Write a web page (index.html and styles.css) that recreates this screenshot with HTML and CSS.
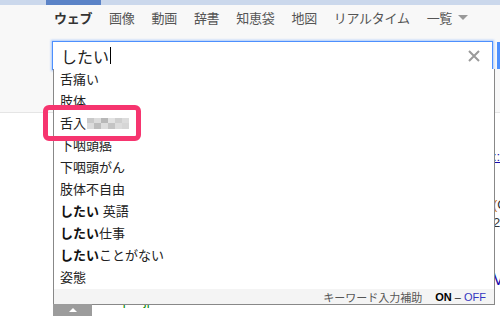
FILE: index.html
```html
<!DOCTYPE html>
<html lang="ja">
<head>
    <meta charset="UTF-8">
    <meta name="viewport" content="width=device-width, initial-scale=1.0">
    <title>したい - 検索</title>
    <link rel="stylesheet" href="styles.css">
</head>
<body>
    <div class="topbar"><span class="topbar-active"></span></div>

    <header class="header">
        <nav class="tabs">
            <a class="tab tab-current">ウェブ</a>
            <a class="tab">画像</a>
            <a class="tab">動画</a>
            <a class="tab">辞書</a>
            <a class="tab">知恵袋</a>
            <a class="tab">地図</a>
            <a class="tab">リアルタイム</a>
            <a class="tab tab-more">一覧<span class="arrow-down"></span></a>
        </nav>

        <div class="search">
            <div class="search-box">
                <span class="query">したい</span><span class="caret"></span>
                <svg class="clear" width="12" height="12" viewBox="0 0 12 12">
                    <path d="M1 1 L11 11 M11 1 L1 11" stroke="#9a9a9a" stroke-width="2"/>
                </svg>

                <!-- suggestion list -->
                <div class="suggest">
                    <ul class="suggest-list">
                        <li>舌痛い</li>
                        <li>肢体</li>
                        <li>舌入<svg class="mosaic" width="42" height="11" viewBox="0 0 42 11">
                            <rect x="0" y="0" width="42" height="11" fill="#dcdcdc"/>
                            <rect x="0" y="0" width="7" height="5" fill="#c9c9c9"/>
                            <rect x="7" y="5" width="7" height="6" fill="#bdbdbd"/>
                            <rect x="14" y="0" width="7" height="5" fill="#b8b8b8"/>
                            <rect x="21" y="5" width="7" height="6" fill="#c4c4c4"/>
                            <rect x="28" y="0" width="7" height="5" fill="#cfcfcf"/>
                            <rect x="35" y="5" width="7" height="6" fill="#d6d6d6"/>
                            <rect x="21" y="0" width="7" height="5" fill="#e2e2e2"/>
                        </svg></li>
                        <li>下咽頭癌</li>
                        <li>下咽頭がん</li>
                        <li>肢体不自由</li>
                        <li><b>したい</b> 英語</li>
                        <li><b>したい</b>仕事</li>
                        <li><b>したい</b>ことがない</li>
                        <li>姿態</li>
                    </ul>
                    <div class="suggest-foot">
                        キーワード入力補助<span class="switch"><b>ON</b> – <a>OFF</a></span>
                    </div>
                    <div class="suggest-tab"><span class="arrow-up"></span></div>
                </div>
            </div>
            <button class="search-btn" type="submit"></button>
        </div>
    </header>

    <main class="results">
        <div class="results-edge">
            <a class="edge-link">::</a>
            <p class="edge-text first"><span class="orange">(</span>C</p>
            <p class="edge-text">2</p>
            <a class="edge-link big">V</a>
        </div>
        <p class="result-url">www.example.jp/search/0001/</p>
    </main>

    <!-- highlight around the third suggestion -->
    <div class="mark"></div>
</body>
</html>
```

FILE: styles.css
```css
body {
    margin: 0;
    width: 500px;
    height: 318px;
    overflow: hidden;
    position: relative;
    background-color: #fff;
    font-family: "Liberation Sans", "Noto Sans CJK JP", sans-serif;
    color: #222;
}

.topbar {
    height: 5px;
    background-color: #cbd8ec;
    padding-left: 46px;
}

.topbar-active {
    display: block;
    width: 55px;
    height: 5px;
    background-color: #5b83c7;
}

.header {
    position: relative;
    z-index: 1;
    background-color: #f8f8f8;
    border-bottom: 1px solid #e5e5e5;
    height: 107px;
}

.tabs {
    display: flex;
    align-items: center;
    gap: 17px;
    height: 24px;
    padding-left: 54px;
}

.tab {
    font-size: 13px;
    color: #555;
    letter-spacing: -0.3px;
}

.tab-current {
    font-weight: bold;
    color: #333;
}

.tab-more {
    display: flex;
    align-items: center;
    gap: 6px;
}

.arrow-down {
    width: 0;
    height: 0;
    border-left: 5px solid transparent;
    border-right: 5px solid transparent;
    border-top: 5px solid #999;
}

.search {
    display: flex;
    gap: 4px;
    margin-top: 12px;
    padding-left: 52px;
}

.search-box {
    position: relative;
    flex: none;
    display: flex;
    align-items: center;
    box-sizing: border-box;
    width: 441px;
    height: 29px;
    padding: 0 12px 0 8px;
    background-color: #fff;
    border: 1px solid #4d90fe;
    box-shadow: 0 0 2px 1px rgba(77, 144, 254, 0.45);
}

.query {
    font-size: 16px;
    color: #222;
}

.caret {
    width: 1px;
    height: 17px;
    margin-left: 1px;
    background-color: #000;
}

.clear {
    margin-left: auto;
}

.search-btn {
    flex: none;
    width: 40px;
    height: 27px;
    margin-top: 1px;
    border: none;
    background-color: #4d90fe;
}

.suggest {
    position: absolute;
    left: 0;
    top: 27px;
    width: 440px;
    background-color: #fff;
    border: 1px solid #888;
    border-top: none;
}

.suggest-list {
    list-style: none;
    margin: 0;
    padding: 0;
}

.suggest-list li {
    height: 22px;
    line-height: 21px;
    padding-left: 6px;
    font-size: 13px;
    color: #222;
    white-space: nowrap;
}

.suggest-list b {
    color: #111;
}

.mosaic {
    margin-left: 1px;
    vertical-align: -1px;
}

.suggest-foot {
    display: flex;
    justify-content: flex-end;
    align-items: center;
    height: 15px;
    padding-right: 8px;
    background-color: #f4f4f4;
    font-size: 11px;
    color: #555;
}

.switch {
    margin-left: 13px;
    color: #222;
}

.switch b {
    color: #000;
}

.switch a {
    color: #3434c0;
}

.suggest-tab {
    position: absolute;
    left: -1px;
    top: 100%;
    display: flex;
    justify-content: center;
    align-items: center;
    width: 39px;
    height: 12px;
    background-color: #9c9c9c;
}

.arrow-up {
    width: 0;
    height: 0;
    border-left: 4px solid transparent;
    border-right: 4px solid transparent;
    border-bottom: 4px solid #fff;
}

.results {
    white-space: nowrap;
}

.results-edge {
    padding: 35px 0 0 493px;
}

.edge-link {
    display: block;
    font-size: 13px;
    line-height: 18px;
    color: #1a0dab;
    text-decoration: underline;
}

.edge-link.big {
    margin-top: 38px;
    font-size: 16px;
    line-height: 20px;
    text-decoration: none;
}

.edge-text {
    margin: 0;
    font-size: 13px;
    line-height: 18px;
    color: #333;
}

.edge-text.first {
    margin-top: 30px;
}

.orange {
    color: #c06a10;
}

.result-url {
    margin: 3px 0 0 60px;
    font-size: 13px;
    line-height: 16px;
    color: #0a8a0a;
}

.mark {
    position: absolute;
    z-index: 2;
    left: 43px;
    top: 105px;
    width: 88px;
    height: 26px;
    border: 5px solid #f6356f;
    border-radius: 6px;
}
```
